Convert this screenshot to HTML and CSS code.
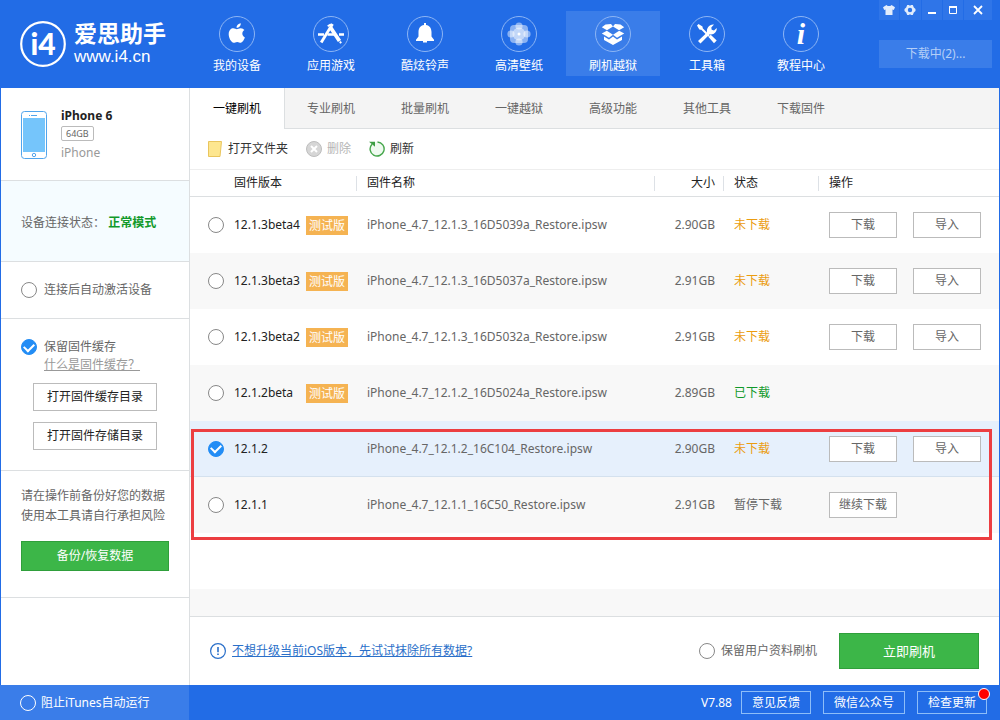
FILE: index.html
```html
<!DOCTYPE html>
<html lang="zh-CN">
<head>
<meta charset="utf-8">
<title>爱思助手</title>
<link rel="stylesheet" href="styles.css">
</head>
<body>
<header class="topbar">
  <div class="brand">
    <svg class="brand-mark" viewBox="0 0 46 46" aria-hidden="true">
      <circle cx="23" cy="23" r="21.8" fill="none" stroke="#fff" stroke-width="2.2"/>
      <text x="23" y="34" text-anchor="middle" class="mark-text">i4</text>
    </svg>
    <div class="brand-words">
      <span class="brand-name">爱思助手</span>
      <span class="brand-site">www.i4.cn</span>
    </div>
  </div>
  <nav class="nav">
    <a class="nav-item" href="#device">
      <svg class="nav-icon" viewBox="0 0 36 36"><circle class="ring" cx="18" cy="18" r="17.5"/><path fill="#fff" d="M21.8 7.2c.2 2.400-1.900 4.700-4.200 4.600-.3-2.300 1.900-4.400 4.200-4.600zM17.800 13.200c1 0 2.300-1.100 4.100-1 1.500.1 2.700.8 3.500 1.900-3 1.800-2.600 6 .5 7.300-.7 1.900-2.300 5-4 5.300-1.200.2-1.900-.8-3.700-.8-1.700 0-2.500.9-3.600.8-2.400-.2-5.100-5.300-4.900-8.800.2-3.600 2.300-5.600 4.600-5.600 1.500 0 2.600.9 3.500.9z"/></svg>
      <span>我的设备</span>
    </a>
    <a class="nav-item" href="#apps">
      <svg class="nav-icon" viewBox="0 0 36 36"><circle class="ring" cx="18" cy="18" r="17.500"/><g fill="none" stroke="#fff"><path stroke-width="2.600" d="M5 18.500h6M14.500 18.500h8M26 18.500h5"/><path stroke-width="2.800" d="M19.500 8 8.200 26.500"/><path stroke-width="3.800" d="M15.800 8.500l1 1.600M17.400 11.200 26.500 25"/><path stroke-width="2" d="M27 25.500l1 1.800"/></g></svg>
      <span>应用游戏</span>
    </a>
    <a class="nav-item" href="#ringtones">
      <svg class="nav-icon" viewBox="0 0 36 36"><circle class="ring" cx="18" cy="18" r="17.500"/><path fill="#fff" d="M17 7h2v2c3.600.6 5.500 3.200 5.500 7v4.500l2.500 3.300V25H20v1.500h-4V25H9v-1.200l2.500-3.300V16c0-3.800 1.900-6.400 5.500-7z"/></svg>
      <span>酷炫铃声</span>
    </a>
    <a class="nav-item" href="#wallpapers">
      <svg class="nav-icon" viewBox="0 0 36 36"><circle class="ring" cx="18" cy="18" r="17.500"/><g fill="#fff" fill-opacity=".48"><circle cx="18" cy="10" r="3.600"/><circle cx="18" cy="26" r="3.600"/><circle cx="10" cy="18" r="3.600"/><circle cx="26" cy="18" r="3.600"/><rect x="9" y="9" width="18" height="18" rx="4"/><circle cx="18" cy="18" r="6.500"/></g><circle cx="18" cy="18" r="1.500" fill="#fff"/></svg>
      <span>高清壁纸</span>
    </a>
    <a class="nav-item is-active" href="#flash">
      <svg class="nav-icon" viewBox="0 0 36 36"><circle class="ring" cx="18" cy="18" r="17.500"/><g fill="#fff"><path d="M10.500 8.500 16 8l2 2.500-6 3.800-5.200-3z"/><path d="M25.500 8.500 20 8l-2 2.500 6 3.800 5.200-3z"/><path d="M6.800 17.500l5-2.800 6.200 4-4 3.100z"/><path d="M29.200 17.500l-5-2.800-6.200 4 4 3.100z"/><path d="M9 20.500l5 3 4-3 4 3 5-3v3.500l-9 5-9-5z"/></g></svg>
      <span>刷机越狱</span>
    </a>
    <a class="nav-item" href="#tools">
      <svg class="nav-icon" viewBox="0 0 36 36"><circle class="ring" cx="18" cy="18" r="17.500"/><path stroke="#fff" stroke-width="2" fill="none" d="M11 11l9 9"/><path fill="#fff" d="M8 9.500 9.500 8l4 2.500.2 1.700-1.800 1.600-1.600-.3zM19.500 21l2.200-2.200 6 5.700-2.700 2.800z"/><path fill="#fff" d="M9 25l9-8.500c-.8-4.500 2.500-8.700 7-8l-2.700 3 .4 2.300 2.300.6 2.700-2.400c.5 4-3.200 7.200-7 6.200L11.500 27.500z"/></svg>
      <span>工具箱</span>
    </a>
    <a class="nav-item" href="#help">
      <svg class="nav-icon" viewBox="0 0 36 36"><circle class="ring" cx="18" cy="18" r="17.500"/><text x="18" y="28" text-anchor="middle" class="info-text">i</text></svg>
      <span>教程中心</span>
    </a>
  </nav>
  <div class="top-actions">
    <div class="window-tools">
      <button type="button" aria-label="皮肤"><svg viewBox="0 0 12 12"><path fill="#e3edfc" d="M3.500 1 4.700 2h2.600l1.200-1L12 3.200 10.800 6 9.500 5.500V11h-7V5.500L1.200 6 0 3.200z"/></svg></button>
      <button type="button" aria-label="设置"><svg viewBox="0 0 12 12"><path fill="#e3edfc" fill-rule="evenodd" d="M3.200 1h1.600L6 1.800 7.200 1h1.600l1 2.400L11.500 5v2L9.800 8.600l-1 2.400H7.200L6 10.200 4.800 11H3.200l-1-2.400L.5 7V5l1.700-1.600zM6 3.800a2.200 2.200 0 1 0 0 4.400 2.200 2.200 0 0 0 0-4.400z"/></svg></button>
      <button type="button" aria-label="最小化"><svg viewBox="0 0 12 12"><path fill="#fff" d="M2 8h8v2H2z"/></svg></button>
      <button type="button" aria-label="最大化"><svg viewBox="0 0 12 12"><path fill="none" stroke="#fff" d="M2.500 3.500h7v6h-7z"/><path fill="#fff" d="M2 2h8v2H2z"/></svg></button>
      <button type="button" aria-label="关闭" class="wide"><svg viewBox="0 0 12 12"><path stroke="#fff" stroke-width="1.800" d="M2 2l8 8M10 2 2 10"/></svg></button>
    </div>
    <button type="button" class="downloads">下载中(2)...</button>
  </div>
</header>

<div class="workspace">
  <aside class="sidebar">
    <section class="device">
      <svg class="phone" viewBox="0 0 26 48" aria-hidden="true"><rect x=".5" y=".5" width="25" height="47" rx="3" fill="#fff" stroke="#51a5ec"/><path fill="#75c5fb" d="M2 7h22v34H2z"/><path stroke="#51a5ec" d="M8 4.500h1M10 4.500h6"/><circle cx="13" cy="44" r="1.700" fill="none" stroke="#51a5ec"/></svg>
      <div class="device-info">
        <strong class="device-name">iPhone 6</strong>
        <span class="capacity">64GB</span>
        <span class="device-type">iPhone</span>
      </div>
    </section>
    <section class="status">设备连接状态： <strong>正常模式</strong></section>
    <section class="activate"><label class="option"><input type="checkbox" class="tick">连接后自动激活设备</label></section>
    <section class="cache">
      <label class="option"><input type="checkbox" class="tick" checked>保留固件缓存</label>
      <a class="cache-help" href="#cache">什么是固件缓存？</a>
      <button type="button" class="btn cache-btn">打开固件缓存目录</button>
      <button type="button" class="btn cache-btn">打开固件存储目录</button>
    </section>
    <section class="backup">
      <p>请在操作前备份好您的数据<br>使用本工具请自行承担风险</p>
      <button type="button" class="btn-green backup-btn">备份/恢复数据</button>
    </section>
  </aside>

  <main class="content">
    <nav class="tabs">
      <a class="tab is-current" href="#t1">一键刷机</a>
      <a class="tab" href="#t2">专业刷机</a>
      <a class="tab" href="#t3">批量刷机</a>
      <a class="tab" href="#t4">一键越狱</a>
      <a class="tab" href="#t5">高级功能</a>
      <a class="tab" href="#t6">其他工具</a>
      <a class="tab" href="#t7">下载固件</a>
    </nav>
    <div class="toolbar">
      <button type="button" class="tool"><svg viewBox="0 0 16 16"><path fill="#fde68f" stroke="#e9c55d" d="M1.500.5h13L13 15.500H1.500z"/></svg>打开文件夹</button>
      <button type="button" class="tool" disabled><svg viewBox="0 0 16 16"><circle cx="8" cy="8" r="7.500" fill="#d6d6d6" stroke="#bdbdbd"/><path stroke="#fff" stroke-width="2" d="M5 5l6 6M11 5l-6 6"/></svg>删除</button>
      <button type="button" class="tool"><svg viewBox="0 0 16 16"><circle cx="8" cy="8" r="7" fill="#effaf0"/><path fill="none" stroke="#45a64b" stroke-width="1.400" d="M8.500 1A7 7 0 1 1 3 3.200"/><path fill="#3d9e43" d="M0 .8h6v5z"/></svg>刷新</button>
    </div>
    <div class="firmware">
      <table class="fw-table">
        <colgroup><col class="c-version"><col><col class="c-size"><col class="c-state"><col class="c-ops"></colgroup>
        <thead><tr><th class="version">固件版本</th><th>固件名称</th><th class="size">大小</th><th>状态</th><th>操作</th></tr></thead>
        <tbody>
          <tr><td><label class="pick"><input type="radio" name="fw" class="tick"><span class="ver">12.1.3beta4</span><span class="beta">测试版</span></label></td><td>iPhone_4.7_12.1.3_16D5039a_Restore.ipsw</td><td class="size">2.90GB</td><td class="pending">未下载</td><td><div class="ops"><button type="button" class="btn">下载</button><button type="button" class="btn">导入</button></div></td></tr>
          <tr><td><label class="pick"><input type="radio" name="fw" class="tick"><span class="ver">12.1.3beta3</span><span class="beta">测试版</span></label></td><td>iPhone_4.7_12.1.3_16D5037a_Restore.ipsw</td><td class="size">2.91GB</td><td class="pending">未下载</td><td><div class="ops"><button type="button" class="btn">下载</button><button type="button" class="btn">导入</button></div></td></tr>
          <tr><td><label class="pick"><input type="radio" name="fw" class="tick"><span class="ver">12.1.3beta2</span><span class="beta">测试版</span></label></td><td>iPhone_4.7_12.1.3_16D5032a_Restore.ipsw</td><td class="size">2.91GB</td><td class="pending">未下载</td><td><div class="ops"><button type="button" class="btn">下载</button><button type="button" class="btn">导入</button></div></td></tr>
          <tr><td><label class="pick"><input type="radio" name="fw" class="tick"><span class="ver">12.1.2beta</span><span class="beta">测试版</span></label></td><td>iPhone_4.7_12.1.2_16D5024a_Restore.ipsw</td><td class="size">2.89GB</td><td class="done">已下载</td><td></td></tr>
          <tr class="is-selected"><td><label class="pick"><input type="radio" name="fw" class="tick" checked><span class="ver">12.1.2</span></label></td><td>iPhone_4.7_12.1.2_16C104_Restore.ipsw</td><td class="size">2.90GB</td><td class="pending">未下载</td><td><div class="ops"><button type="button" class="btn">下载</button><button type="button" class="btn">导入</button></div></td></tr>
          <tr><td><label class="pick"><input type="radio" name="fw" class="tick"><span class="ver">12.1.1</span></label></td><td>iPhone_4.7_12.1.1_16C50_Restore.ipsw</td><td class="size">2.91GB</td><td>暂停下载</td><td><div class="ops"><button type="button" class="btn">继续下载</button></div></td></tr>
        </tbody>
      </table>
      <div class="highlight"></div>
    </div>
    <div class="action-bar">
      <svg class="alert" viewBox="0 0 16 16" aria-hidden="true"><circle cx="8" cy="8" r="7.400" fill="none" stroke="#2a6fc9" stroke-width="1.200"/><path fill="#2a6fc9" d="M7.200 4h1.600v5.200H7.200zM7.200 10.500h1.600V12H7.200z"/></svg>
      <a class="erase-link" href="#erase">不想升级当前iOS版本，先试试抹除所有数据?</a>
      <label class="option keep"><input type="checkbox" class="tick">保留用户资料刷机</label>
      <button type="button" class="btn-green flash-btn">立即刷机</button>
    </div>
  </main>
</div>

<footer class="statusbar">
  <label class="itunes"><input type="checkbox" class="tick light">阻止iTunes自动运行</label>
  <div class="status-actions">
    <span>V7.88</span>
    <button type="button" class="btn-line">意见反馈</button>
    <button type="button" class="btn-line">微信公众号</button>
    <button type="button" class="btn-line has-dot">检查更新</button>
  </div>
</footer>
</body>
</html>
```
FILE: styles.css
```css
:root {
  --blue: #226ce6;
  --blue-soft: #3a7de9;
  --line: #dcdfe1;
  --green: #3cb648;
}

* { box-sizing: border-box; }

body {
  display: flex;
  flex-direction: column;
  min-height: 100vh;
  margin: 0;
  background: #fff;
  color: #666;
  font: 12px/20px "Noto Sans", "Noto Sans CJK SC", sans-serif;
}

button {
  padding: 0;
  border: 0;
  background: none;
  color: inherit;
  font: inherit;
}

a { color: inherit; text-decoration: none; }

/* Header */
.topbar {
  display: flex;
  height: 88px;
  background: var(--blue);
  color: #fff;
}

.brand {
  display: flex;
  gap: 8px;
  width: 190px;
  padding: 21px 0 0 20px;
}

.brand-mark { width: 46px; height: 46px; }
.mark-text { fill: #fff; font: 900 30px Lato, sans-serif; }
.brand-words { display: flex; flex-direction: column; }
.brand-name { font: 700 23px/26px "Liberation Sans", "Noto Sans CJK SC", sans-serif; }
.brand-site { font: 17px/20px "Liberation Sans", sans-serif; }

.nav { display: flex; padding-top: 11px; }

.nav-item {
  display: flex;
  flex-direction: column;
  align-items: center;
  gap: 4px;
  width: 94px;
  height: 65px;
  padding-top: 5px;
}

.nav-item.is-active { background: var(--blue-soft); }
.nav-icon { width: 36px; height: 36px; }
.ring { fill: none; stroke: #8db5f4; }
.info-text { fill: #fff; font: italic 700 30px "Liberation Serif", serif; }

.top-actions {
  display: flex;
  flex-direction: column;
  gap: 20px;
  width: 113px;
  margin: 0 8px 0 auto;
}

.window-tools { display: flex; gap: 1px; }

.window-tools button {
  display: grid;
  flex: 1;
  place-items: center;
  height: 20px;
  background: #2f75e8;
}

.window-tools .wide { flex: 0 0 28px; }
.window-tools svg { width: 12px; height: 12px; }
.downloads { height: 28px; background: var(--blue-soft); color: #b5cff7; }

/* Workspace */
.workspace {
  display: flex;
  flex: 1;
  border: solid var(--blue);
  border-width: 0 1px;
}

.sidebar {
  flex: 0 0 189px;
  border-right: 1px solid var(--line);
}

.sidebar section { border-bottom: 1px solid var(--line); }
.sidebar .device { display: flex; gap: 14px; height: 93px; padding: 18px 20px; }
.phone { width: 26px; height: 48px; margin-top: 5px; }
.device-info { display: flex; flex-direction: column; align-items: flex-start; }
.device-name { color: #222; }

.capacity {
  padding: 0 4px;
  border: 1px solid #bbb;
  border-radius: 2px;
  font-size: 9px;
  line-height: 13px;
}

.device-type { color: #999; line-height: 24px; }
.sidebar .status { padding: 32px 20px 28px; background: #f5fcff; }
.status strong { color: #11992a; }
.sidebar .activate { padding: 18px 20px; }
.option { display: flex; align-items: center; gap: 7px; }

.tick {
  display: grid;
  flex: none;
  place-items: center;
  width: 16px;
  height: 16px;
  margin: 0;
  border: 1px solid #888;
  border-radius: 50%;
  background: #fff;
  appearance: none;
}

.tick:checked { border-color: #238df5; background: #238df5; }

.tick:checked::after {
  content: "";
  width: 8px;
  height: 5px;
  margin-bottom: 2px;
  border: solid #fff;
  border-width: 0 0 2px 2px;
  transform: rotate(-45deg);
}

.tick.light { border-color: #fff; background: transparent; }

.sidebar .cache {
  display: flex;
  flex-direction: column;
  align-items: flex-start;
  padding: 18px 20px 20px;
}

.cache-help {
  margin: 0 0 10px 23px;
  color: #999;
  line-height: 16px;
  text-decoration: underline;
}

.btn { border: 1px solid #bbb; background: #fff; }
.cache-btn { width: 124px; height: 28px; margin-left: 12px; color: #222; }
.cache-btn + .cache-btn { margin-top: 11px; }
.sidebar .backup { padding: 15px 20px 26px; }
.backup p { margin: 0 0 15px; }
.btn-green { border: 1px solid #2f9f3b; background: var(--green); color: #fff; }
.backup-btn { width: 100%; height: 30px; }

.content { display: flex; flex: 1; flex-direction: column; min-width: 0; }

.tabs {
  display: flex;
  height: 41px;
  border-bottom: 1px solid var(--line);
  background: #f4f4f4;
}

.tab { width: 94px; line-height: 41px; text-align: center; }

.tab.is-current {
  width: 95px;
  height: 41px;
  border-right: 1px solid var(--line);
  background: #fff;
  color: #000;
}

.tab.is-current + .tab { margin-left: -1px; }

.toolbar {
  display: flex;
  gap: 18px;
  align-items: center;
  height: 41px;
  padding: 0 17px;
  border-bottom: 1px solid #eee;
}

.tool { display: flex; gap: 5px; align-items: center; color: #333; }
.tool svg { width: 16px; height: 16px; }
.tool:disabled { color: #b5b5b5; }

/* Firmware list */
.firmware { position: relative; flex: 1; padding-bottom: 83px; background: linear-gradient(0deg, #f8f8f8 27px, #fff 27px); }

.fw-table {
  width: 100%;
  border-collapse: separate;
  border-spacing: 0;
  table-layout: fixed;
}

.c-version { width: 167px; }
.c-size { width: 69px; }
.c-state { width: 95px; }
.c-ops { width: 180px; }

th, td { padding: 0 0 0 10px; text-align: left; white-space: nowrap; }

th {
  height: 27px;
  border-bottom: 1px solid var(--line);
  background: linear-gradient(#dde1e6, #dde1e6) right 6px / 1px 15px no-repeat;
  color: #222;
  font-weight: 400;
}

th:last-child { background: none; }
th.version { padding-left: 44px; }
.size { padding: 0 9px 0 0; text-align: right; }
td { height: 56px; }
td:first-child { padding-left: 18px; }
tbody tr:nth-child(even) { background: #f8f8f8; }
tbody .is-selected { background: #e6f0fc; }
.is-selected td { border-bottom: 1px solid #d4e1ee; }
.pick { display: flex; align-items: center; color: #222; }
.ver { width: 72px; margin-left: 10px; }
.beta { padding: 0 3px; background: #f5b352; color: #fff; line-height: 19px; }
.pending { color: #eb9c10; }
.done { color: #11992a; }
.ops { display: flex; gap: 16px; }
.ops .btn { width: 68px; height: 26px; }

.highlight {
  position: absolute;
  inset: 259px 7px 76px 1px;
  border: 3px solid #ec3e41;
  pointer-events: none;
}

.action-bar {
  display: flex;
  align-items: center;
  height: 69px;
  padding: 0 20px;
  border-top: 1px solid var(--line);
}

.alert { width: 16px; height: 16px; margin-right: 6px; }
.erase-link { color: #2a6fc9; text-decoration: underline; }
.keep { margin: 0 22px 0 auto; gap: 6px; }
.flash-btn { width: 140px; height: 36px; font-size: 13px; }

/* Status bar */
.statusbar {
  display: flex;
  justify-content: space-between;
  height: 35px;
  background: var(--blue);
  color: #fff;
}

.itunes {
  display: flex;
  gap: 5px;
  align-items: center;
  width: 189px;
  padding-left: 20px;
  background: var(--blue-soft);
}

.status-actions { display: flex; gap: 12px; align-items: center; padding-right: 13px; }
.status-actions span { margin-right: -3px; }
.btn-line { position: relative; height: 23px; padding: 0 10px; border: 1px solid #8dbdf8; }

.has-dot::after {
  position: absolute;
  top: -4px;
  right: -4px;
  width: 10px;
  height: 10px;
  border: 1px solid #fff;
  border-radius: 50%;
  background: #f00;
  content: "";
}
```
